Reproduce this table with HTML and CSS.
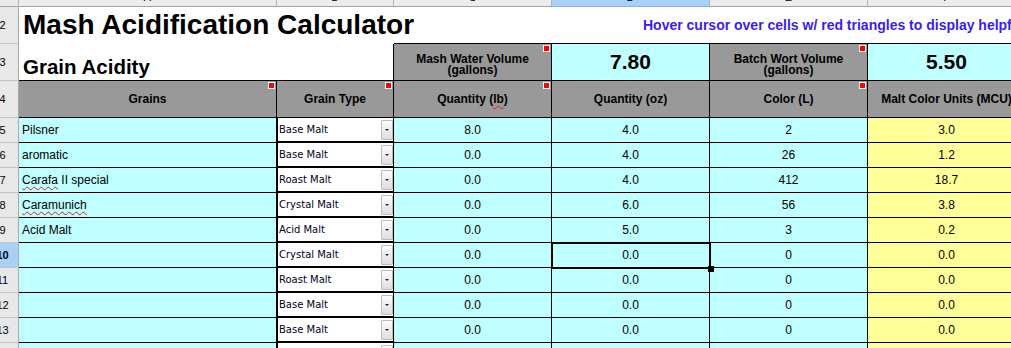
FILE: index.html
```html
<!DOCTYPE html>
<html>
<head>
<meta charset="utf-8">
<title>Mash Acidification Calculator</title>
<link rel="stylesheet" href="styles.css">
</head>
<body>
<div class="sheet">
  <!-- column header strip -->
  <div class="ch corner"></div>
  <div class="ch"><span>A</span></div>
  <div class="ch"><span>B</span></div>
  <div class="ch"><span>C</span></div>
  <div class="ch sel"><span>D</span></div>
  <div class="ch"><span>E</span></div>
  <div class="ch"><span>F</span></div>

  <!-- row 2 -->
  <div class="rh"><span>2</span></div>
  <div class="c title span2">Mash Acidification Calculator</div>
  <div class="c bb"></div>
  <div class="c bb hover-cell"><span class="hover">Hover cursor over cells w/ red triangles to display helpful comments</span></div>
  <div class="c bb"></div>
  <div class="c bb"></div>

  <!-- row 3 -->
  <div class="rh"><span>3</span></div>
  <div class="c bb subtitle">Grain Acidity</div>
  <div class="c bb br"></div>
  <div class="c bb br grey two"><span>Mash Water Volume</span><span>(gallons)</span><i class="mk"></i></div>
  <div class="c bb br cyan big">7.80</div>
  <div class="c bb br grey two"><span>Batch Wort Volume</span><span>(gallons)</span><i class="mk"></i></div>
  <div class="c bb br cyan big">5.50</div>

  <!-- row 4 -->
  <div class="rh"><span>4</span></div>
  <div class="c bb br grey hd">Grains<i class="mk"></i></div>
  <div class="c bb br grey hd">Grain Type<i class="mk"></i></div>
  <div class="c bb br grey hd">Quantity (<span class="sp">lb</span>)<i class="mk"></i></div>
  <div class="c bb br grey hd">Quantity (oz)</div>
  <div class="c bb br grey hd">Color (L)<i class="mk"></i></div>
  <div class="c bb br grey hd">Malt Color Units (MCU)</div>

  <!-- row 5 -->
  <div class="rh"><span>5</span></div>
  <div class="c bb br cyan d name">Pilsner</div>
  <div class="c gt"><span class="txt">Base Malt</span><span class="btn"></span></div>
  <div class="c bb br cyan d">8.0</div>
  <div class="c bb br cyan d">4.0</div>
  <div class="c bb br cyan d">2</div>
  <div class="c bb br yellow d">3.0</div>

  <!-- row 6 -->
  <div class="rh"><span>6</span></div>
  <div class="c bb br cyan d name">aromatic</div>
  <div class="c gt"><span class="txt">Base Malt</span><span class="btn"></span></div>
  <div class="c bb br cyan d">0.0</div>
  <div class="c bb br cyan d">4.0</div>
  <div class="c bb br cyan d">26</div>
  <div class="c bb br yellow d">1.2</div>

  <!-- row 7 -->
  <div class="rh"><span>7</span></div>
  <div class="c bb br cyan d name"><span><span class="sp">Carafa</span> II special</span></div>
  <div class="c gt"><span class="txt">Roast Malt</span><span class="btn"></span></div>
  <div class="c bb br cyan d">0.0</div>
  <div class="c bb br cyan d">4.0</div>
  <div class="c bb br cyan d">412</div>
  <div class="c bb br yellow d">18.7</div>

  <!-- row 8 -->
  <div class="rh"><span>8</span></div>
  <div class="c bb br cyan d name"><span class="sp">Caramunich</span></div>
  <div class="c gt"><span class="txt">Crystal Malt</span><span class="btn"></span></div>
  <div class="c bb br cyan d">0.0</div>
  <div class="c bb br cyan d">6.0</div>
  <div class="c bb br cyan d">56</div>
  <div class="c bb br yellow d">3.8</div>

  <!-- row 9 -->
  <div class="rh"><span>9</span></div>
  <div class="c bb br cyan d name">Acid Malt</div>
  <div class="c gt"><span class="txt">Acid Malt</span><span class="btn"></span></div>
  <div class="c bb br cyan d">0.0</div>
  <div class="c bb br cyan d">5.0</div>
  <div class="c bb br cyan d">3</div>
  <div class="c bb br yellow d">0.2</div>

  <!-- row 10 -->
  <div class="rh rsel"><span>10</span></div>
  <div class="c bb br cyan d name"></div>
  <div class="c gt"><span class="txt">Crystal Malt</span><span class="btn"></span></div>
  <div class="c bb br cyan d">0.0</div>
  <div class="c bb br cyan d">0.0<i class="selbox"><i class="handle"></i></i></div>
  <div class="c bb br cyan d">0</div>
  <div class="c bb br yellow d">0.0</div>

  <!-- row 11 -->
  <div class="rh"><span>11</span></div>
  <div class="c bb br cyan d name"></div>
  <div class="c gt"><span class="txt">Roast Malt</span><span class="btn"></span></div>
  <div class="c bb br cyan d">0.0</div>
  <div class="c bb br cyan d">0.0</div>
  <div class="c bb br cyan d">0</div>
  <div class="c bb br yellow d">0.0</div>

  <!-- row 12 -->
  <div class="rh"><span>12</span></div>
  <div class="c bb br cyan d name"></div>
  <div class="c gt"><span class="txt">Base Malt</span><span class="btn"></span></div>
  <div class="c bb br cyan d">0.0</div>
  <div class="c bb br cyan d">0.0</div>
  <div class="c bb br cyan d">0</div>
  <div class="c bb br yellow d">0.0</div>

  <!-- row 13 -->
  <div class="rh"><span>13</span></div>
  <div class="c bb br cyan d name"></div>
  <div class="c gt"><span class="txt">Base Malt</span><span class="btn"></span></div>
  <div class="c bb br cyan d">0.0</div>
  <div class="c bb br cyan d">0.0</div>
  <div class="c bb br cyan d">0</div>
  <div class="c bb br yellow d">0.0</div>

  <!-- row 14 (partly visible) -->
  <div class="rh"><span>14</span></div>
  <div class="c bb br cyan d name"></div>
  <div class="c gt"><span class="txt"></span><span class="btn"></span></div>
  <div class="c bb br cyan d"></div>
  <div class="c bb br cyan d"></div>
  <div class="c bb br cyan d"></div>
  <div class="c bb br yellow d"></div>
</div>
</body>
</html>
```

FILE: styles.css
```css
html, body {
  margin: 0;
  padding: 0;
  background: #ffffff;
  overflow: hidden;
}

body {
  font-family: "Liberation Sans", Arial, sans-serif;
  color: #000;
}

.sheet {
  display: grid;
  grid-template-columns: 19px 258px 117px 158px 158px 158px 158px;
  grid-template-rows: 7px 37px 37px 37px repeat(10, 25px);
  width: 1026px;
}

/* column header strip */
.ch {
  box-sizing: border-box;
  background: #ececec;
  border-right: 1px solid #b3b3b3;
  border-bottom: 1px solid #a4a4a4;
  overflow: hidden;
  font-size: 11px;
  line-height: 14px;
  text-align: center;
}
.ch span {
  display: block;
  margin-top: -10px;
}
.ch.sel {
  background: #a9d0f9;
  border-bottom-color: #8fb3db;
}
.ch.corner {
  background: #e9e9e9;
}

/* row headers */
.rh {
  box-sizing: border-box;
  background: #e8e8e8;
  border-right: 1px solid #a8a8a8;
  border-bottom: 1px solid #c4c4c4;
  overflow: hidden;
  display: flex;
  align-items: center;
  font-size: 11px;
}
.rh span {
  display: block;
  flex: none;
  width: 33px;
  margin-left: -14px;
  text-align: center;
}
.rh.rsel {
  background: #a9d0f9;
  font-weight: bold;
}

/* cells */
.c {
  box-sizing: border-box;
  position: relative;
  min-width: 0;
}
.br { border-right: 1px solid #000; }
.bb { border-bottom: 1px solid #000; }

.span2 { grid-column: span 2; }

.title {
  font-weight: bold;
  font-size: 28px;
  line-height: 32px;
  padding: 2px 0 0 4px;
  white-space: nowrap;
}

.hover-cell {
  white-space: nowrap;
}
.hover {
  display: block;
  padding: 10px 0 0 91px;
  font-weight: bold;
  font-size: 14px;
  line-height: 16px;
  color: #3a1cf0;
}

.subtitle {
  font-weight: bold;
  font-size: 20.5px;
  line-height: 24px;
  padding: 11px 0 0 4px;
  white-space: nowrap;
}

.grey { background: #999999; }
.cyan { background: #c0ffff; }
.yellow { background: #ffff99; }

.two {
  display: flex;
  flex-direction: column;
  align-items: center;
  font-weight: bold;
  font-size: 12px;
  line-height: 11px;
  padding-top: 10px;
}
.two span {
  display: block;
  height: 11px;
  overflow: visible;
  white-space: nowrap;
}

.big {
  display: flex;
  align-items: center;
  justify-content: center;
  font-weight: bold;
  font-size: 21px;
}

.hd {
  display: flex;
  align-items: center;
  justify-content: center;
  font-weight: bold;
  font-size: 12px;
  white-space: nowrap;
}

.d {
  display: flex;
  align-items: center;
  justify-content: center;
  font-size: 12px;
  white-space: nowrap;
}
.d.name {
  justify-content: flex-start;
  padding-left: 3px;
}

.sp {
  text-decoration: underline wavy #e21a1a;
  text-decoration-thickness: 1px;
  text-underline-offset: 2px;
}

/* comment markers */
.mk {
  position: absolute;
  top: 1px;
  right: 1px;
  width: 5px;
  height: 5px;
  background: #ff0000;
  border: 1px solid #ffffff;
}

/* grain type drop-down cells */
.gt {
  background: #ffffff;
  border-left: 1px solid #000;
  border-right: 1px solid #000;
  border-bottom: 2px solid #000;
  display: flex;
  align-items: center;
  padding-left: 1px;
  font-family: "DejaVu Sans", Verdana, sans-serif;
  font-size: 10px;
  color: #000022;
}
.gt .txt {
  flex: 1;
  white-space: nowrap;
}
.gt .btn {
  flex: none;
  box-sizing: border-box;
  width: 12px;
  height: 20px;
  margin-right: 0;
  background: linear-gradient(#fcfcfc, #dedede);
  border: 1px solid #bcbcbc;
  border-radius: 1px;
  display: flex;
  align-items: center;
  justify-content: center;
}
.gt .btn::after {
  content: "";
  width: 0;
  height: 0;
  border-left: 2px solid transparent;
  border-right: 2px solid transparent;
  border-top: 2px solid #222;
}

/* selected cell */
.selbox {
  position: absolute;
  left: -1px;
  top: -1px;
  right: -2px;
  bottom: -2px;
  border: 2px solid #000;
  z-index: 2;
}
.handle {
  position: absolute;
  right: -5px;
  bottom: -5px;
  width: 6px;
  height: 6px;
  background: #000;
}
```
